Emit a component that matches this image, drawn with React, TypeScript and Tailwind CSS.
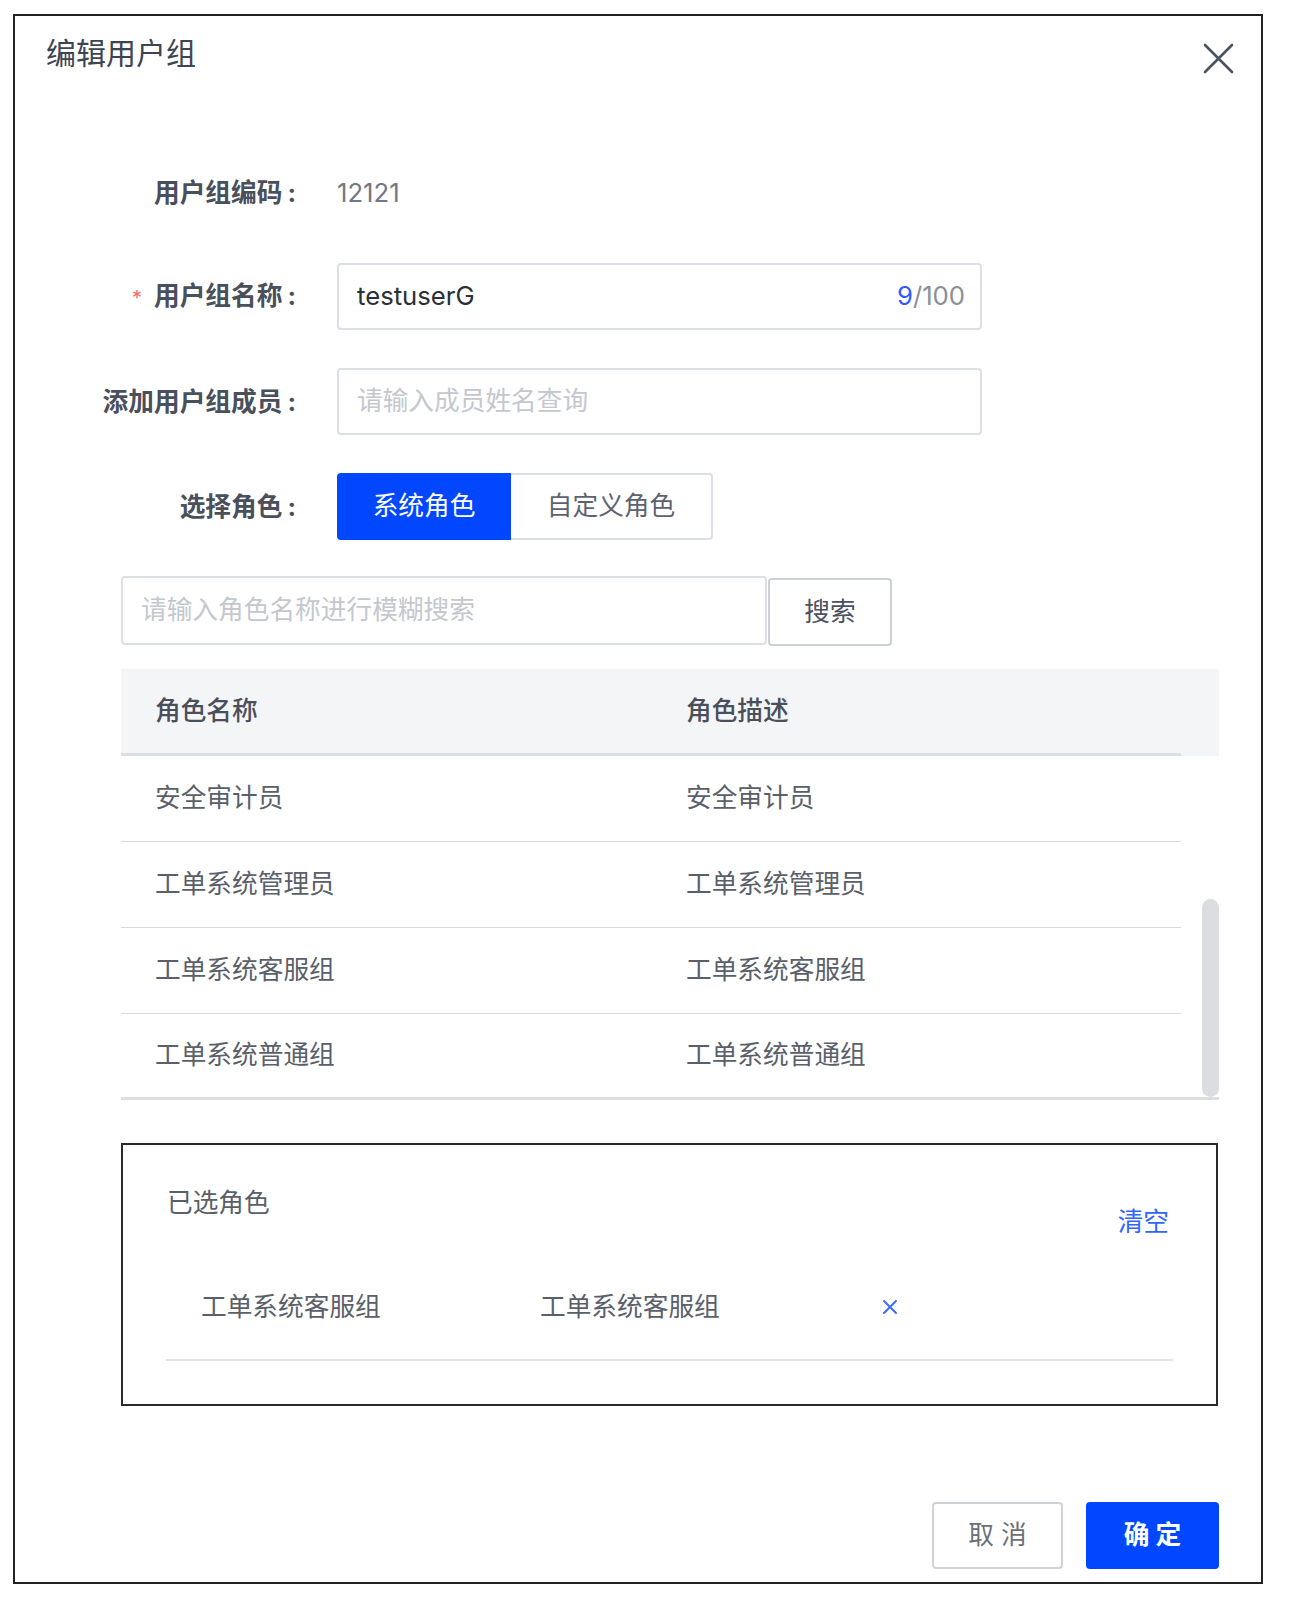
import React from 'react';

const roles = [
  { name: '安全审计员', desc: '安全审计员' },
  { name: '工单系统管理员', desc: '工单系统管理员' },
  { name: '工单系统客服组', desc: '工单系统客服组' },
  { name: '工单系统普通组', desc: '工单系统普通组' },
];

function CloseIcon() {
  return (
    <svg width="31" height="31" viewBox="0 0 31 31" fill="none" stroke="#4b5262" strokeWidth="2.6" strokeLinecap="round">
      <path d="M2 2L29 29M29 2L2 29" />
    </svg>
  );
}

function SmallX() {
  return (
    <svg width="16" height="16" viewBox="0 0 16 16" fill="none" stroke="#3a6cff" strokeWidth="2" strokeLinecap="round">
      <path d="M2 2L14 14M14 2L2 14" />
    </svg>
  );
}

interface FormRowProps {
  label: string;
  required?: boolean;
  className?: string;
  children: React.ReactNode;
}

function FormRow({ label, required, className, children }: FormRowProps) {
  return (
    <div className={`flex items-center ${className ?? ''}`}>
      <div className="w-[281px] shrink-0 flex justify-end items-baseline text-[25.7px] font-bold text-[#4a4f5c] leading-[36px]">
        {required && <span className="text-[#f56c6c] text-[20px] font-normal mr-[12px]">*</span>}
        <span>{label}</span>
        <span className="ml-[5px]">:</span>
      </div>
      <div className="ml-[41px]">{children}</div>
    </div>
  );
}

export default function App() {
  return (
    <div className="min-h-[1604px] bg-white pt-[14px] pl-[13px] font-['Inter','Noto_Sans_CJK_SC',sans-serif]">
      <div className="w-[1250px] h-[1570px] border-2 border-[#222]">
        {/* header */}
        <div className="flex items-start justify-between pt-[17px] pl-[31px] pr-[27px]">
          <h2 className="text-[30px] leading-[40px] text-[#3d4452] font-normal">编辑用户组</h2>
          <button className="mt-[10px]">
            <CloseIcon />
          </button>
        </div>

        {/* form */}
        <FormRow label="用户组编码" className="mt-[101px] h-[36px]">
          <span className="text-[25.7px] leading-[36px] text-[#737884]">12121</span>
        </FormRow>

        <FormRow label="用户组名称" required className="mt-[52px]">
          <div className="w-[645px] h-[67px] border-2 border-[#dcdfe6] rounded-[4px] flex items-center justify-between pl-[18px] pr-[15px] text-[25.7px]">
            <span className="text-[#2b2f38]">testuserG</span>
            <span className="text-[#8a8f99]">
              <span className="text-[#2f5bff]">9</span>/100
            </span>
          </div>
        </FormRow>

        <FormRow label="添加用户组成员" className="mt-[38px]">
          <div className="w-[645px] h-[67px] border-2 border-[#dcdfe6] rounded-[4px] flex items-center pl-[18px] text-[25.7px] text-[#c4c7ce]">
            请输入成员姓名查询
          </div>
        </FormRow>

        <FormRow label="选择角色" className="mt-[38px]">
          <div className="flex h-[67px] text-[25.7px]">
            <div className="w-[174px] bg-[#0047ff] rounded-l-[4px] text-white flex items-center justify-center">系统角色</div>
            <div className="w-[202px] border-2 border-l-0 border-[#dcdfe6] rounded-r-[4px] text-[#5c6270] flex items-center justify-center">
              自定义角色
            </div>
          </div>
        </FormRow>

        {/* role search */}
        <div className="pl-[106px] pr-[41px]">
          <div className="flex items-start mt-[36px] text-[25.7px]">
            <div className="w-[646px] h-[69px] border-2 border-[#dcdfe6] rounded-[4px] flex items-center pl-[18px] text-[#c4c7ce]">
              请输入角色名称进行模糊搜索
            </div>
            <button className="ml-[1px] mt-[2px] w-[124px] h-[68px] border-2 border-[#cdd0d7] rounded-[4px] text-[#4b5060] flex items-center justify-center">
              搜索
            </button>
          </div>

          {/* table */}
          <div className="mt-[23px] w-[1098px] border-b-[3px] border-[#dcdee3]">
            <div className="flex h-[87px] bg-[#f4f5f7]">
              <div className="w-[1060px] flex border-b-[3px] border-[#dcdee3] text-[25.7px] font-medium text-[#4a4f5c]">
                <div className="w-[531px] pl-[34px] flex items-center">角色名称</div>
                <div className="flex-1 pl-[34px] flex items-center">角色描述</div>
              </div>
            </div>
            <div className="flex">
              <div className="w-[1060px]">
                {roles.map((r, i) => (
                  <div
                    key={r.name}
                    className={`flex text-[25.7px] text-[#5a5f6a] ${i < roles.length - 1 ? 'h-[86px] border-b border-[#d8dae0]' : 'h-[83px]'}`}
                  >
                    <div className="w-[531px] pl-[34px] flex items-center">{r.name}</div>
                    <div className="flex-1 pl-[34px] flex items-center">{r.desc}</div>
                  </div>
                ))}
              </div>
              <div className="flex-1 flex flex-col justify-end items-end">
                <div className="w-[17px] h-[198px] rounded-full bg-[#dcdde1]" />
              </div>
            </div>
          </div>

          {/* selected roles */}
          <div className="mt-[43px] w-[1097px] h-[263px] border-2 border-[#2b2b2b]">
            <div className="flex items-start justify-between pt-[40px] pl-[44px] pr-[47px] text-[25.7px] leading-[36px]">
              <span className="text-[#5a5f6a]">已选角色</span>
              <button className="mt-[19px] text-[#2f66ff]">清空</button>
            </div>
            <div className="mx-[43px] mt-[49px] pb-[34px] border-b-2 border-[#e2e3e8] flex items-center text-[25.7px] leading-[36px] text-[#5a5f6a]">
              <span className="w-[374px] pl-[35px]">工单系统客服组</span>
              <span className="w-[342px]">工单系统客服组</span>
              <button>
                <SmallX />
              </button>
            </div>
          </div>
        </div>

        {/* footer */}
        <div className="flex justify-end gap-[23px] pr-[42px] mt-[96px] text-[25.7px]">
          <button className="w-[131px] h-[67px] border-2 border-[#cfd2d9] rounded-[4px] text-[#6b6f78]">取 消</button>
          <button className="w-[133px] h-[67px] bg-[#0047ff] rounded-[4px] text-white font-bold">确 定</button>
        </div>
      </div>
    </div>
  );
}
